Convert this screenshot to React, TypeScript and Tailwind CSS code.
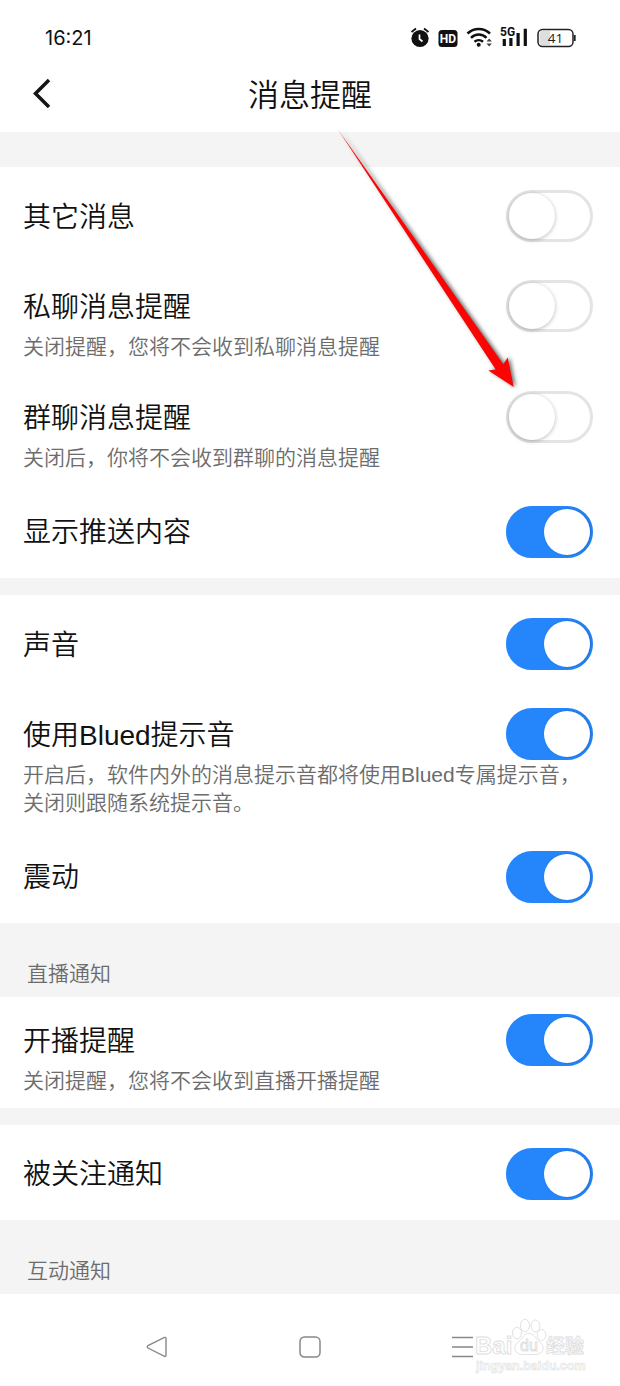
import { useState } from "react";

type ToggleProps = { id: string; on: boolean };

function Toggle({ id, on }: ToggleProps) {
  const [checked, setChecked] = useState(on);
  return (
    <input
      id={id}
      type="checkbox"
      role="switch"
      checked={checked}
      onChange={(e) => setChecked(e.target.checked)}
      className="relative h-[52px] w-[87px] shrink-0 cursor-pointer appearance-none rounded-full border-[3px] border-[#e4e4e4] bg-white before:absolute before:top-0 before:left-0 before:size-[46px] before:rounded-full before:bg-white before:shadow-[0_1px_4px_rgba(0,0,0,0.28)] checked:border-[#2586fc] checked:bg-[#2586fc] checked:before:left-[35px] checked:before:shadow-[1px_0_3px_rgba(0,0,0,0.2)]"
    />
  );
}

type RowProps = { id: string; title: string; on: boolean; note?: string; size?: string };

function Row({ id, title, on, note, size = "" }: RowProps) {
  const box = note ? "pt-[17px] pb-[13px]" : `flex flex-col justify-center ${size}`;
  return (
    <div className={`pr-[27px] pl-[23px] ${box}`}>
      <div className="flex h-[52px] items-center justify-between">
        <label htmlFor={id} className="pt-[3px] text-[28px] leading-[52px] text-[#111]">
          {title}
        </label>
        <Toggle id={id} on={on} />
      </div>
      {note && <p className="pt-px text-[21px] leading-[28px] whitespace-pre-line text-[#6c6c6c]">{note}</p>}
    </div>
  );
}

function GroupLabel({ children }: { children: string }) {
  return (
    <h2 className="h-[74px] bg-[#f4f4f4] pt-[37px] pl-[27px] text-[21px] leading-[28px] text-[#6c6c6c]">{children}</h2>
  );
}

function StatusBar() {
  return (
    <div className="flex h-[75px] items-center justify-between pr-11 pl-[45px]">
      <span className="font-['Inter',sans-serif] text-[20px] leading-6 font-normal text-[#111]">16:21</span>
      <div className="flex items-center">
        <svg width="168" height="26" viewBox="408 25 168 26" fill="none" aria-hidden="true">
          <circle cx="420" cy="38.500" r="8.600" fill="#111" />
          <path d="M411.500 32l4.500-3.500M428.500 32l-4.500-3.500" stroke="#111" strokeWidth="1.800" />
          <path d="M419.500 34.500v4.500l3 2.500" stroke="#fff" strokeWidth="1.700" />
          <rect x="438.500" y="30" width="19" height="17" rx="3.500" fill="#111" />
          <text x="448" y="43" textAnchor="middle" fill="#fff" fontSize="12" fontWeight="700" fontFamily="Roboto, sans-serif">HD</text>
          <g stroke="#111" strokeWidth="2.500">
            <path d="M467.500 33.500A16 16 0 0 1 490 33.500" />
            <path d="M471 37.800A11 11 0 0 1 486.500 37.800" />
            <path d="M474.500 41.800A6.500 6.500 0 0 1 483 41.800" />
          </g>
          <circle cx="478.700" cy="44.800" r="2" fill="#111" />
          <path d="M486.500 41.500l2.700-3 2.700 3zM486.500 43.500l2.700 3 2.700-3z" fill="#444" />
          <text x="500" y="36" fill="#111" fontSize="12" fontWeight="700" fontFamily="Roboto, sans-serif">5G</text>
          <path d="M502.700 39h3.200v7h-3.200zM509.300 38h3.200v8h-3.200zM516.500 33h3.200v13h-3.200zM523.700 28.700h3.200V46h-3.200z" fill="#111" />
          <rect x="538" y="29.500" width="35" height="17" rx="4.500" stroke="#222" strokeWidth="1.500" fill="#fff" />
          <path d="M541.500 31h8.500v14h-8.500a2 2 0 0 1-2-2v-10a2 2 0 0 1 2-2z" fill="#dedede" />
          <path d="M574.800 35v6" stroke="#222" strokeWidth="1.700" />
          <text x="555.500" y="43" textAnchor="middle" fill="#222" fontSize="13.500" fontWeight="400" fontFamily="Open Sans, sans-serif">41</text>
        </svg>
      </div>
    </div>
  );
}

function Watermark() {
  return (
    <svg className="absolute top-[22px] left-[472px]" width="120" height="60" viewBox="472 1316 120 60" aria-hidden="true">
      <g fill="#fff" stroke="#dedede" strokeWidth="0.900">
        <ellipse cx="517" cy="1333" rx="4.500" ry="5.800" />
        <ellipse cx="525" cy="1325.500" rx="4.500" ry="6.300" />
        <ellipse cx="535.500" cy="1326" rx="4.500" ry="6" />
        <ellipse cx="541.500" cy="1335" rx="4.300" ry="5.500" />
        <path d="M529 1333.500c5 0 6 4 9 7 4 3 6 6 5 9-2 6-8 5-14 5s-12 1-14-5c-1-3 1-6 5-9 3-3 4-7 9-7z" />
        <text x="475" y="1353.500" fontSize="24" fontWeight="700" fontFamily="Liberation Sans, sans-serif">Bai</text>
        <text x="520" y="1351" fontSize="16" fontWeight="400" fontFamily="Liberation Sans, sans-serif">du</text>
        <text x="546" y="1353" fontSize="19" fontWeight="700" fontFamily="Noto Sans CJK SC, sans-serif">经验</text>
        <text x="476" y="1369.500" fontSize="12.500" fontWeight="700" strokeWidth="0.600" fontFamily="Liberation Sans, sans-serif">jingyan.baidu.com</text>
      </g>
    </svg>
  );
}

function Arrow() {
  return (
    <svg className="pointer-events-none absolute top-[120px] left-[330px]" width="200" height="280" viewBox="330 120 200 280" aria-hidden="true">
      <path
        d="M338 129.500L503.300 364.300L507.700 357.500L513.700 387L488.300 370.500L495.700 369.500Z"
        fill="#fb0404"
        className="drop-shadow-[2px_0_2px_rgba(0,0,0,0.6)]"
      />
    </svg>
  );
}

export default function App() {
  return (
    <div className="relative min-h-screen bg-white font-['Liberation_Sans','Noto_Sans_CJK_SC',sans-serif] font-[350]" lang="zh-CN">
      <StatusBar />
      <header className="grid h-[57px] grid-cols-[1fr_auto_1fr] items-start">
        <button type="button" aria-label="返回" className="ml-[29px] flex h-9 w-6 items-center justify-center">
          <svg width="20" height="30" viewBox="0 0 20 30" fill="none" stroke="#151515" strokeWidth="3.500" aria-hidden="true">
            <path d="M18 2L4.500 15.500L18 29" />
          </svg>
        </button>
        <h1 className="pt-px text-[31px] leading-10 text-[#111]">消息提醒</h1>
      </header>
      <main>
        <div className="h-[35px] bg-[#f4f4f4]" />
        <section>
          <Row id="other" title="其它消息" on={false} size="h-24 pt-0.5" />
          <Row id="private" title="私聊消息提醒" on={false} note="关闭提醒，您将不会收到私聊消息提醒" />
          <Row id="group" title="群聊消息提醒" on={false} note="关闭后，你将不会收到群聊的消息提醒" />
          <Row id="push" title="显示推送内容" on size="h-[93px]" />
        </section>
        <div className="h-[17px] bg-[#f4f4f4]" />
        <section>
          <Row id="sound" title="声音" on size="h-24 pt-0.5" />
          <Row
            id="blued"
            title="使用Blued提示音"
            on
            note={"开启后，软件内外的消息提示音都将使用Blued专属提示音，\n关闭则跟随系统提示音。"}
          />
          <Row id="vibrate" title="震动" on size="h-[93px]" />
        </section>
        <section>
          <GroupLabel>直播通知</GroupLabel>
          <Row id="live" title="开播提醒" on note="关闭提醒，您将不会收到直播开播提醒" />
        </section>
        <div className="h-[17px] bg-[#f4f4f4]" />
        <section>
          <Row id="follow" title="被关注通知" on size="h-[95px] pt-0.5" />
        </section>
        <section>
          <GroupLabel>互动通知</GroupLabel>
        </section>
      </main>
      <nav className="relative grid h-[92px] grid-cols-3 px-20 pt-7 pb-[14px]" aria-label="系统导航">
        <button type="button" aria-label="后退" className="flex items-center justify-center">
          <svg width="22" height="22" viewBox="0 0 22 22" fill="none" stroke="#888" strokeWidth="1.400" aria-hidden="true">
            <path d="M18.500 1.400L2 9.500Q.5 10.800 2 12L18.500 20.400Q20 20.800 20 19V3Q20 1 18.500 1.400Z" />
          </svg>
        </button>
        <button type="button" aria-label="主页" className="flex items-center justify-center">
          <svg width="22" height="22" viewBox="0 0 22 22" fill="none" stroke="#888" strokeWidth="1.500" aria-hidden="true">
            <rect x="1" y="1" width="20" height="20" rx="4.500" />
          </svg>
        </button>
        <button type="button" aria-label="最近任务" className="flex items-center justify-center">
          <svg width="22" height="22" viewBox="0 0 22 22" fill="none" stroke="#888" strokeWidth="1.700" aria-hidden="true">
            <path d="M0 1.500h21M0 11h21M0 20.500h21" />
          </svg>
        </button>
        <Watermark />
      </nav>
      <Arrow />
    </div>
  );
}
